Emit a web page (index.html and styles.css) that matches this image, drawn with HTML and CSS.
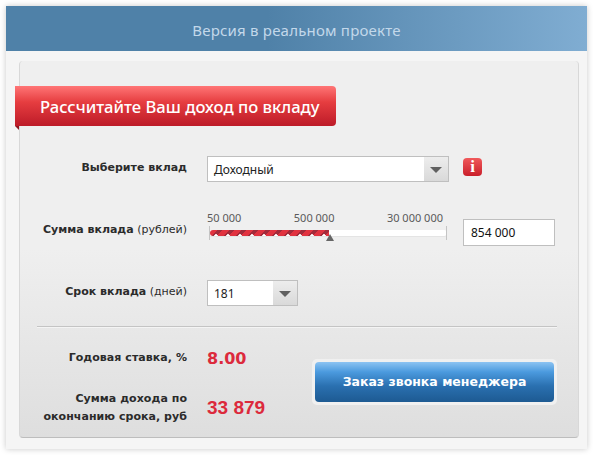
FILE: index.html
```html
<!DOCTYPE html>
<html lang="ru">

<head>
  <meta charset="UTF-8">
  <meta name="viewport" content="width=device-width, initial-scale=1.0">
  <title>Версия в реальном проекте</title>
  <link rel="stylesheet" href="styles.css">
</head>

<body>
  <div class="card">
    <header class="card-head">Версия в реальном проекте</header>

    <main class="panel">
      <h1 class="ribbon">Рассчитайте Ваш доход по вкладу</h1>

      <div class="row row-deposit">
        <div class="label"><b>Выберите вклад</b></div>
        <div class="controls">
          <div class="select select-wide">
            <span class="select-value">Доходный</span>
            <span class="select-arrow"></span>
          </div>
          <span class="info">i</span>
        </div>
      </div>

      <div class="row row-sum">
        <div class="label"><b>Сумма вклада</b> (рублей)</div>
        <div class="controls">
          <div class="slider">
            <div class="slider-labels">
              <span>50 000</span>
              <span>500 000</span>
              <span>30 000 000</span>
            </div>
            <div class="slider-track">
              <div class="slider-fill"></div>
              <span class="slider-thumb"></span>
            </div>
          </div>
          <div class="amount">854 000</div>
        </div>
      </div>

      <div class="row row-term">
        <div class="label"><b>Срок вклада</b> (дней)</div>
        <div class="controls">
          <div class="select select-small">
            <span class="select-value">181</span>
            <span class="select-arrow"></span>
          </div>
        </div>
      </div>

      <hr class="divider">

      <div class="result">
        <div class="result-grid">
          <div class="result-label">Годовая ставка, %</div>
          <div class="result-value">8.00</div>
          <div class="result-label">Сумма дохода по<br>окончанию срока, руб</div>
          <div class="result-value result-income">33 879</div>
        </div>
        <div class="btn-wrap">
          <a class="btn" href="#">Заказ звонка менеджера</a>
        </div>
      </div>
    </main>
  </div>
</body>

</html>
```

FILE: styles.css
```css
* {
  box-sizing: border-box;
}

body {
  margin: 0;
  padding: 6px;
  background-color: #ffffff;
  color: #2b2b2b;
  font-family: 'DejaVu Sans', Verdana, sans-serif;
  font-size: 11px;
}

.card {
  width: 581px;
  height: 443px;
  background-color: #f5f5f5;
  box-shadow: 0 0 6px rgba(0, 0, 0, 0.22);
}

.card-head {
  height: 45px;
  line-height: 49px;
  text-align: center;
  font-family: 'Noto Sans', sans-serif;
  font-size: 15px;
  letter-spacing: 0.2px;
  color: #c3d8ea;
  background: linear-gradient(to right, #4f81a8 0%, #4f81a8 45%, #80add2 100%);
}

.panel {
  position: relative;
  width: 560px;
  height: 377px;
  margin: 10px 0 0 13px;
  padding-top: 25px;
  border-radius: 4px;
  border-right: 1px solid #d8d8d8;
  border-bottom: 1px solid #bdbdbd;
  border-left: 1px solid #d8d8d8;
  background: linear-gradient(to bottom, #efefef 0%, #efefef 50%, #dedede 100%);
}

.ribbon {
  position: relative;
  width: 321px;
  height: 40px;
  margin: 0 0 0 -5px;
  padding-left: 25px;
  border-radius: 0 4px 4px 0;
  background: linear-gradient(to bottom, #ff7576 0%, #e63d40 40%, #bd1b28 100%);
  color: #ffffff;
  font-family: 'Noto Sans', sans-serif;
  font-size: 16.6px;
  font-weight: 500;
  line-height: 41px;
  white-space: nowrap;
}

.ribbon::after {
  content: "";
  position: absolute;
  left: 0;
  top: 40px;
  border-top: 4px solid #8e1620;
  border-left: 4px solid transparent;
}

.row {
  display: flex;
}

.row-deposit {
  margin-top: 30px;
  height: 26px;
}

.row-sum {
  margin-top: 28px;
  height: 36px;
}

.row-term {
  margin-top: 34px;
  height: 26px;
}

.label {
  width: 167px;
  text-align: right;
  font-size: 11px;
  line-height: 24px;
  white-space: nowrap;
}

.row-sum .label {
  line-height: 40px;
}

.controls {
  display: flex;
  margin-left: 20px;
}

.select {
  display: flex;
  height: 26px;
  border: 1px solid #bfbfbf;
  background-color: #ffffff;
}

.select-wide {
  width: 242px;
}

.select-small {
  width: 91px;
}

.select-value {
  flex: 1;
  padding-left: 6px;
  font-family: 'Noto Sans', sans-serif;
  font-size: 12px;
  line-height: 26px;
  color: #222222;
}

.select-arrow {
  display: flex;
  align-items: center;
  justify-content: center;
  width: 24px;
  background: linear-gradient(to bottom, #ededed, #d9d9d9);
}

.select-arrow::before {
  content: "";
  margin-top: 1px;
  border-top: 6px solid #606060;
  border-left: 6px solid transparent;
  border-right: 6px solid transparent;
}

.info {
  width: 19px;
  height: 18px;
  margin: 2px 0 0 14px;
  border-radius: 4px;
  background: linear-gradient(to bottom, #f0595b, #c91f2a);
  color: #ffffff;
  font-family: 'Liberation Serif', serif;
  font-size: 17px;
  font-weight: bold;
  line-height: 18px;
  text-align: center;
}

.slider {
  width: 241px;
}

.slider-labels {
  display: flex;
  justify-content: space-between;
  width: 236px;
  height: 20px;
  color: #5a5a5a;
  font-family: 'Noto Sans', sans-serif;
  font-size: 11px;
  line-height: 15px;
}

.slider-track {
  position: relative;
  height: 6px;
  margin-left: 2px;
  width: 238px;
  border-radius: 3px;
  background-color: #ffffff;
  box-shadow: 0 1px 0 #e4e4e4;
}

.slider-track::before,
.slider-track::after {
  content: "";
  position: absolute;
  top: -4px;
  height: 14px;
  border-left: 1px solid #c4c4c4;
}

.slider-track::before {
  left: 0;
}

.slider-track::after {
  right: 0;
}

.slider-fill {
  width: 119px;
  height: 6px;
  margin-left: 1px;
  border-radius: 3px 0 0 3px;
  background:
    radial-gradient(circle at 6px 6px, #ffffff 0, #ffffff 1.5px, transparent 2px) 0 0 / 12px 6px,
    repeating-linear-gradient(135deg, #e1323f 0, #e1323f 5.5px, #a32a3a 5.5px, #a32a3a 8.5px);
}

.slider-thumb {
  position: absolute;
  left: 117px;
  top: 4px;
  border-bottom: 7px solid #666666;
  border-left: 4px solid transparent;
  border-right: 4px solid transparent;
}

.amount {
  width: 92px;
  height: 27px;
  margin: 9px 0 0 15px;
  padding-left: 7px;
  border: 1px solid #bfbfbf;
  background-color: #ffffff;
  color: #111111;
  font-family: 'Noto Sans', sans-serif;
  font-size: 12px;
  line-height: 25px;
}

.divider {
  width: 520px;
  height: 1px;
  margin: 20px 0 0 17px;
  border: 0;
  background-color: #c4c4c4;
  box-shadow: 0 1px 0 #f4f4f4;
}

.result {
  display: flex;
  margin-top: 18px;
}

.result-grid {
  display: grid;
  grid-template-columns: 167px auto;
  grid-template-rows: 26px 46px;
  row-gap: 14px;
  column-gap: 20px;
  width: 292px;
}

.result-label {
  text-align: right;
  font-size: 11px;
  font-weight: bold;
  letter-spacing: 0.05px;
  line-height: 18px;
  white-space: nowrap;
  align-self: center;
}

.result-value {
  padding-top: 1px;
  color: #dc2a3c;
  font-size: 16px;
  font-weight: bold;
  line-height: 26px;
  align-self: center;
  white-space: nowrap;
}

.result-income {
  padding-top: 0;
  font-family: 'Liberation Sans', sans-serif;
  font-size: 19px;
}

.btn-wrap {
  width: 245px;
  height: 46px;
  margin-top: 14px;
  padding: 3px;
  border-radius: 5px;
  background-color: #f0f0f0;
}

.btn {
  display: block;
  height: 40px;
  border-radius: 4px;
  background: linear-gradient(to bottom, #8cc3f2 0%, #4b9ade 25%, #2a70b0 60%, #1d5a92 100%);
  color: #ffffff;
  font-size: 12.5px;
  font-weight: bold;
  line-height: 39px;
  text-align: center;
  text-decoration: none;
}
```
